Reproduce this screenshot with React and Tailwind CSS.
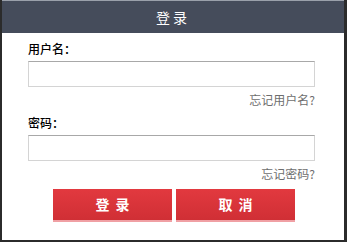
export default function App() {
  const font = { fontFamily: '"Noto Sans CJK SC", "Liberation Sans", sans-serif' };
  return (
    <div className="w-[347px] h-[242px] bg-white border-l-2 border-r-[3px] border-b-2 border-[#2b2b2b] flex flex-col" style={font}>
      <div className="h-[33px] bg-[#454c5b] border-t border-[#9aa0aa] flex items-center justify-center text-white text-[14px] tracking-[3px]">
        登录
      </div>
      <div className="flex flex-col px-[26px] pt-[7px]">
        <label className="text-[12px] leading-[18px] text-black font-medium">用户名：</label>
        <input className="mt-[3px] h-[26px] w-[287px] border border-[#d4d4d4] border-t-[#a8a8a8] outline-none" />
        <div className="w-[287px] text-right text-[12px] leading-[16px] mt-[5px] text-[#6e6e6e]">忘记用户名?</div>
        <label className="mt-[6px] text-[12px] leading-[18px] text-black font-medium">密码：</label>
        <input className="mt-[3px] h-[26px] w-[287px] border border-[#d4d4d4] border-t-[#a8a8a8] outline-none" />
        <div className="w-[287px] text-right text-[12px] leading-[16px] mt-[5px] text-[#6e6e6e]">忘记密码?</div>
        <div className="flex gap-[4px] mt-[7px] ml-[25px]">
          <button className="w-[119px] h-[33px] bg-gradient-to-b from-[#e2393f] to-[#d02f35] border-b-2 border-[#f0a0a4] text-white text-[14px] font-bold tracking-[6px] pl-[6px]">登录</button>
          <button className="w-[119px] h-[33px] bg-gradient-to-b from-[#e2393f] to-[#d02f35] border-b-2 border-[#f0a0a4] text-white text-[14px] font-bold tracking-[6px] pl-[6px]">取消</button>
        </div>
      </div>
    </div>
  );
}
